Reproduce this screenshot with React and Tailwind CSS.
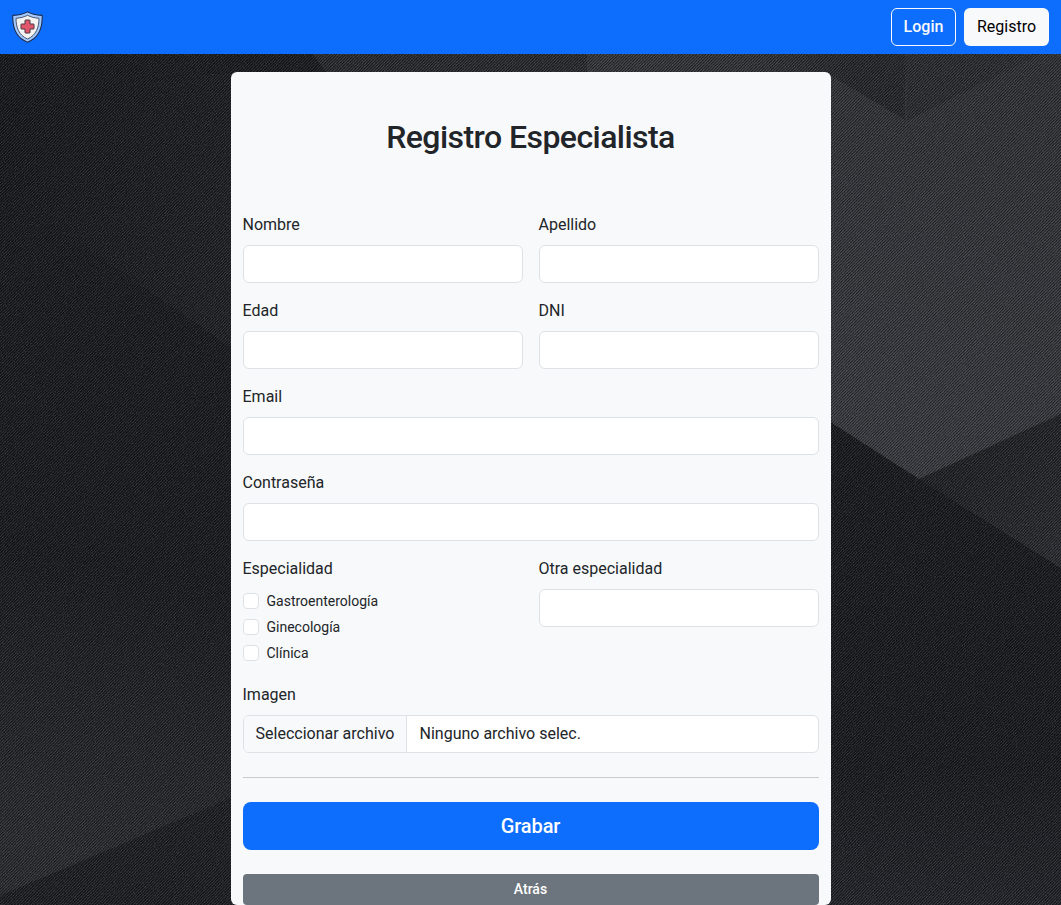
import React from 'react';

function ShieldLogo() {
  return (
    <svg className="h-8 w-8" viewBox="0 0 32 32" aria-hidden="true">
      <path d="M15.500 .9C11.700 3.200 6.500 4.100 .8 4.400C.4 16 3.100 26.500 15.500 31.200C27.900 26.500 30.600 16 30.200 4.400C24.500 4.100 19.300 3.200 15.500 .9Z" fill="#a4c9ff" stroke="#1d2c4c" strokeWidth="1.100" strokeLinejoin="round" />
      <path d="M15.500 4.300C12.100 6.100 8.200 7 4 7.300C4.100 16.500 6.700 24.200 15.500 28C24.300 24.200 26.900 16.500 27 7.300C22.800 7 18.900 6.100 15.500 4.300Z" fill="#f3f3f1" stroke="#3a465c" strokeWidth=".9" strokeLinejoin="round" />
      <path d="M13.500 9h4q.5 0 .5.500v3.500h3.500q.5 0 .5.500v4q0 .5-.5.500h-3.500v3.500q0 .5-.5.500h-4q-.5 0-.5-.5v-3.500h-3.500q-.5 0-.5-.5v-4q0-.5.5-.5h3.500v-3.500q0-.5.5-.5z" fill="#e0566b" stroke="#4a3440" strokeWidth="1" strokeLinejoin="round" />
    </svg>
  );
}

function Backdrop() {
  return (
    <svg className="absolute inset-0 h-full w-full" viewBox="0 0 1061 905" preserveAspectRatio="xMidYMid slice" aria-hidden="true">
      <defs>
        <linearGradient id="leftTop" gradientUnits="userSpaceOnUse" x1="0" y1="150" x2="230" y2="260">
          <stop offset="0" stopColor="#131519" />
          <stop offset="1" stopColor="#1b1d21" />
        </linearGradient>
        <linearGradient id="leftGlow" gradientUnits="userSpaceOnUse" x1="140" y1="560" x2="90" y2="850">
          <stop offset="0" stopColor="#141619" />
          <stop offset="1" stopColor="#26282c" />
        </linearGradient>
        <linearGradient id="panel" gradientUnits="userSpaceOnUse" x1="1040" y1="60" x2="900" y2="480">
          <stop offset="0" stopColor="#2d2e32" />
          <stop offset="1" stopColor="#37383e" />
        </linearGradient>
        <linearGradient id="wedge" gradientUnits="userSpaceOnUse" x1="970" y1="430" x2="1061" y2="560">
          <stop offset="0" stopColor="#1b1c20" />
          <stop offset="1" stopColor="#28292e" />
        </linearGradient>
        <linearGradient id="rightLow" x1="0" y1="0" x2="0" y2="1">
          <stop offset="0" stopColor="#15161a" />
          <stop offset=".75" stopColor="#16171b" />
          <stop offset="1" stopColor="#202127" />
        </linearGradient>
        <linearGradient id="topLight" gradientUnits="userSpaceOnUse" x1="587" y1="0" x2="850" y2="0">
          <stop offset="0" stopColor="#323337" />
          <stop offset=".6" stopColor="#303135" />
          <stop offset="1" stopColor="#232428" />
        </linearGradient>
        <filter id="grain" x="0" y="0" width="100%" height="100%">
          <feTurbulence type="fractalNoise" baseFrequency=".9" numOctaves="2" seed="4" />
          <feColorMatrix values="0 0 0 0 .92  0 0 0 0 .94  0 0 0 0 1  1.200 0 0 0 -.5" />
        </filter>
        <pattern id="twill" width="3" height="3" patternUnits="userSpaceOnUse" shapeRendering="crispEdges">
          <path d="M2 0h1v1h-1zM1 1h1v1h-1zM0 2h1v1h-1z" fill="#f4f6ff" fillOpacity=".075" />
          <path d="M0 0h1v1h-1zM2 1h1v1h-1zM1 2h1v1h-1z" fill="#000" fillOpacity=".36" />
        </pattern>
      </defs>
      <path fill="#15171a" d="M0 0h1061v905H0z" />
      <path fill="url(#leftTop)" d="M0 54H560V540L230 347L40 215Q20 200 0 240z" />
      <path fill="url(#leftGlow)" d="M0 530L530 680L231 798L0 896z" />
      <path fill="#191b1f" d="M0 896L231 798L500 684V905H0z" />
      <path fill="url(#rightLow)" d="M700 340H1061V905H700z" />
      <path fill="url(#wedge)" d="M919 479L1061 414V568z" />
      <path fill="url(#panel)" d="M640 0H1061V414L919 479L640 299z" />
      <path fill="#16181b" d="M200 54H312L328 74H200z" />
      <path fill="#25272a" d="M312 54H587V74H328z" />
      <path fill="url(#topLight)" d="M587 54H905V120L831 76L587 74z" />
      <path fill="#28292d" d="M905 54H1040L907 121z" />
      <path fill="url(#twill)" d="M0 0h1061v905H0z" />
      <path filter="url(#grain)" opacity=".22" d="M0 0h1061v905H0z" />
    </svg>
  );
}

const control = 'h-[38px] w-full rounded-md border border-[#dee2e6] bg-white px-3 outline-none';

function Field({ label, id, type = 'text', className = '' }) {
  return (
    <div className={className}>
      <label htmlFor={id} className="mb-2 block">{label}</label>
      <input id={id} type={type} className={`${control} block`} />
    </div>
  );
}

const specialties = ['Gastroenterología', 'Ginecología', 'Clínica'];

export default function App() {
  return (
    <div className="relative isolate flex h-[905px] flex-col overflow-hidden bg-[#17191c] font-['Roboto','Liberation_Sans',sans-serif] text-base text-[#212529]">
      <div className="absolute inset-0 -z-10"><Backdrop /></div>

      <nav className="flex h-[54px] shrink-0 items-center justify-between bg-[#0d6efd] px-3">
        <a href="#inicio" aria-label="Inicio"><ShieldLogo /></a>
        <div className="flex gap-2">
          <button className="h-[38px] w-[65px] rounded-md border border-[#f8f9fa] font-medium text-[#f8f9fa]">Login</button>
          <button className="h-[38px] w-[85px] rounded-md bg-[#f8f9fa] text-black">Registro</button>
        </div>
      </nav>

      <main className="mx-auto mt-[18px] w-[600px] rounded-md bg-[#f8f9fa] px-3">
        <h1 className="pt-[46px] text-center text-[32px] leading-[38px] font-medium tracking-[-0.55px]">Registro Especialista</h1>
        <form className="mt-[57px]">
          <div className="grid grid-cols-2 gap-4">
            <Field id="nombre" label="Nombre" />
            <Field id="apellido" label="Apellido" />
            <Field id="edad" label="Edad" />
            <Field id="dni" label="DNI" />
            <Field id="email" type="email" label="Email" className="col-span-2" />
            <Field id="clave" type="password" label="Contraseña" className="col-span-2" />
            <fieldset>
              <legend className="mb-2 block">Especialidad</legend>
              {specialties.map((name) => (
                <label key={name} className="mb-0.5 flex h-6 items-center gap-2 text-sm">
                  <input type="checkbox" className="h-4 w-4 appearance-none rounded border border-[#dee2e6] bg-white" />
                  {name}
                </label>
              ))}
            </fieldset>
            <Field id="otra" label="Otra especialidad" />
            <div className="col-span-2">
              <div className="mb-2">Imagen</div>
              <div className="flex h-[38px] overflow-hidden rounded-md border border-[#dee2e6] bg-white leading-9">
                <button type="button" className="w-[163px] shrink-0 border-r border-[#dee2e6] bg-[#f8f9fa] pl-px">Seleccionar archivo</button>
                <span className="pl-[13px]">Ninguno archivo selec.</span>
              </div>
            </div>
          </div>
          <hr className="my-6 border-[#c8cacc]" />
          <button type="button" className="block h-12 w-full rounded-lg bg-[#0d6efd] text-xl font-medium tracking-[-0.1px] text-white">Grabar</button>
          <button type="button" className="mt-6 block h-[31px] w-full rounded bg-[#6c757d] pb-px text-sm font-medium text-white">Atrás</button>
        </form>
      </main>
    </div>
  );
}
